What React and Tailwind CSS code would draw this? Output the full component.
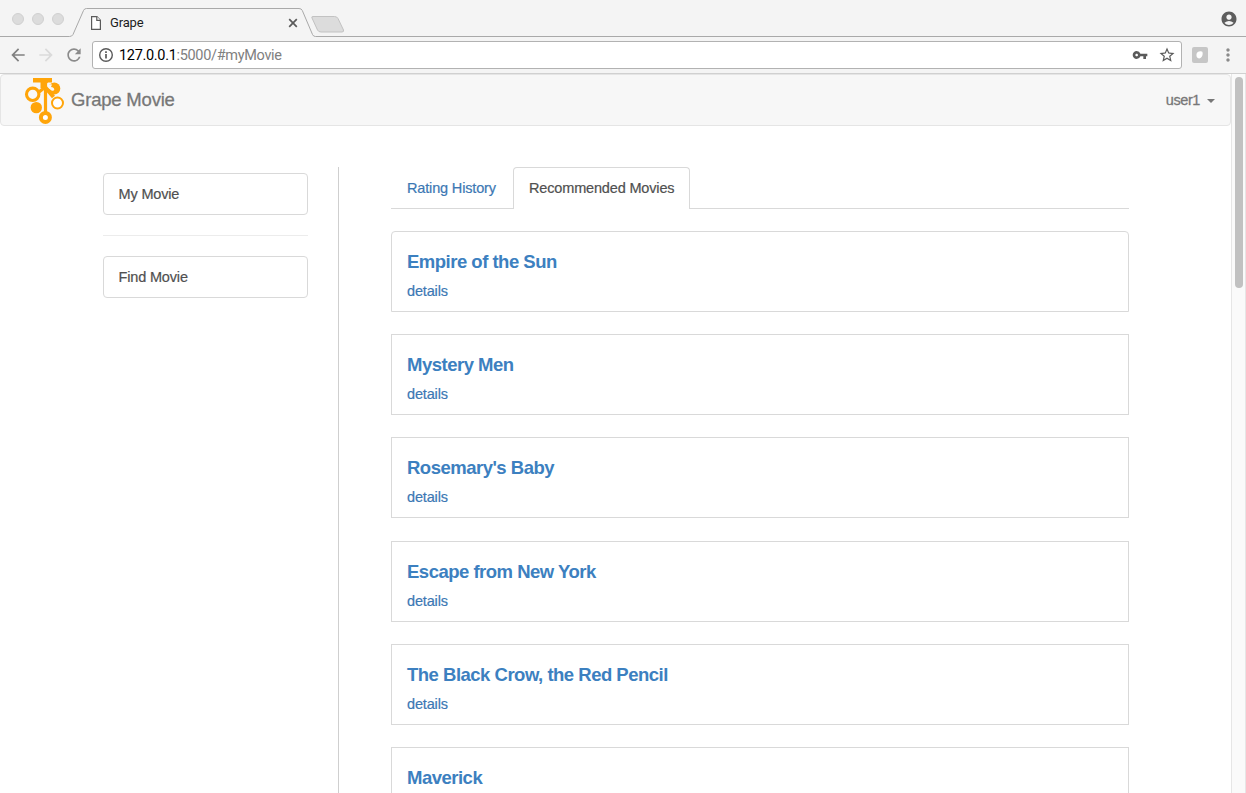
import React from "react";
import {
  MdAccountCircle,
  MdArrowBack,
  MdArrowForward,
  MdMoreVert,
  MdRefresh,
  MdStarBorder,
  MdVpnKey,
} from "react-icons/md";

const movies = [
  "Empire of the Sun",
  "Mystery Men",
  "Rosemary's Baby",
  "Escape from New York",
  "The Black Crow, the Red Pencil",
  "Maverick",
];

function TabStrip() {
  return (
    <div className="relative flex h-[37px] shrink-0 items-center bg-[#f4f4f4]">
      <svg className="absolute inset-0" width="1246" height="37" viewBox="0 0 1246 37" fill="none">
        <path d="M0 36.5H69.500Q72 36.500 73 34.500L83.500 10.500Q84.300 8.500 86.500 8.500H299Q301.500 8.500 302.300 10.500L312.500 34.500Q313.300 36.500 315.500 36.500H1246" stroke="#a9a9a9" />
        <path d="M313 16.500H334.500Q337 16.500 338 18.500L343.500 30Q344 32 342 32H321Q318.500 32 317.500 30L312 18Q311.300 16.500 313 16.500Z" fill="#dcdcdc" stroke="#c2c2c2" />
      </svg>
      <div className="relative flex w-full items-center pb-px pl-3">
        <div className="mt-0.5 flex gap-2">
          {[0, 1, 2].map((n) => (
            <span key={n} className="size-3 rounded-full border border-[#d0d0d0] bg-[#dcdcdc]" />
          ))}
        </div>
        <svg className="mt-2.5 ml-[26px]" width="12" height="14" viewBox="0 0 12 14" fill="#fff" stroke="#5a5a5a" strokeWidth="1.200">
          <path d="M1.600 .6H6.800L10.400 4.300V13.400H1.600Z" />
          <path d="M6.800 .6V4.300H10.400" />
        </svg>
        <span className="mt-2.5 ml-2 w-[178px] font-[Roboto] text-[13px] leading-5 text-[#1c1c1c]">Grape</span>
        <svg className="mt-[9px]" width="10" height="10" viewBox="0 0 10 10" stroke="#5a5a5a" strokeWidth="1.700">
          <path d="M1.200 1.200L8.800 8.800M8.800 1.200L1.200 8.800" />
        </svg>
        <MdAccountCircle className="mt-0.5 mr-2 ml-auto size-[18px] text-[#5d5d5d]" />
      </div>
    </div>
  );
}

function Toolbar() {
  return (
    <div className="flex h-[37px] shrink-0 items-center border-b border-[#d0d0d0] bg-[#f4f4f4] pr-2 pl-2">
      <MdArrowBack className="size-5 text-[#808080]" />
      <MdArrowForward className="ml-2 size-5 text-[#dadada]" />
      <MdRefresh className="ml-2 size-5 text-[#8b8b8b]" />
      <div className="ml-2 flex h-[28px] w-[1090px] items-center rounded-[3px] border border-[#b2b2b2] bg-white pr-[5px] pl-[5px]">
        <svg width="16" height="16" viewBox="0 0 16 16" fill="none" stroke="#5a5a5a">
          <circle cx="8" cy="8" r="6.300" strokeWidth="1.400" />
          <path d="M8 7.100V11.500M8 4.300V6" strokeWidth="1.700" />
        </svg>
        <span className="mt-0.5 ml-[5px] font-[Roboto] text-[14.500px] leading-5 tracking-[-0.32px] text-[#808080]">
          <span className="text-black">127.0.0.1</span>:5000/#myMovie
        </span>
        <MdVpnKey className="ml-auto size-4 text-[#5a5a5a]" />
        <MdStarBorder className="ml-[10px] size-[18px] text-[#5a5a5a]" />
      </div>
      <svg className="ml-[10px]" width="16" height="16" viewBox="0 0 16 16">
        <rect width="16" height="16" rx="2" fill="#c6c6c6" />
        <path d="M4.500 7Q5 4.500 8.500 4.200Q11 4 10.700 6.500Q10.500 10.300 8 11.300Q4 12 4.500 7Z" fill="#fff" />
      </svg>
      <MdMoreVert className="ml-auto size-5 text-[#8a8a8a]" />
    </div>
  );
}

function Logo() {
  return (
    <svg width="40" height="48" viewBox="24 76 40 48" fill="none" stroke="#ffa50a">
      <circle cx="54.300" cy="88.500" r="6" fill="#ffa50a" stroke="none" />
      <path d="M47.500 85.500Q49 83.500 52 84.500L51 87Q54 87 54.300 89.500Q53.800 91.500 51.500 90.500L48 88Z" fill="#f7f7f7" stroke="none" />
      <path d="M33 78H52V82.500H48L45.500 85.500L42 82.500H33Z" fill="#ffa50a" stroke="none" />
      <path d="M43.500 80V88" strokeWidth="6" />
      <path d="M45 87L53.500 97" strokeWidth="4" />
      <path d="M45.500 84V112.500" strokeWidth="3.200" />
      <path d="M44 88L39 92" strokeWidth="3.500" />
      <circle cx="32.700" cy="94.300" r="6.200" fill="#f9f9f9" strokeWidth="3.100" />
      <circle cx="57.500" cy="103" r="5.500" fill="#fff" strokeWidth="2" />
      <circle cx="36.300" cy="107.600" r="5.700" fill="#ffa50a" stroke="none" />
      <circle cx="45.400" cy="117.400" r="4.500" fill="#fff" strokeWidth="4" />
    </svg>
  );
}

function MovieCard({ title, first }) {
  return (
    <article className={`flex h-[81px] shrink-0 flex-col border border-[#d9d9d9] px-[15px] pt-[19px] ${first ? "rounded-t" : ""}`}>
      <h4 className="text-[18.500px] leading-[22px] font-bold tracking-[-0.5px] text-[#3c80c0]">{title}</h4>
      <a className="mt-2 text-[14.500px] leading-5 text-[#3c78b4] [-webkit-text-stroke:0.2px]">details</a>
    </article>
  );
}

export default function App() {
  return (
    <div className="flex h-[793px] w-[1246px] flex-col overflow-hidden bg-white font-['Liberation_Sans',Arial,sans-serif] text-[14.500px] tracking-[-0.16px] text-[#505050]">
      <TabStrip />
      <Toolbar />
      <div className="flex min-h-0 flex-1">
        <div className="flex w-[1231px] flex-col">
          <nav className="flex h-[52px] shrink-0 items-center rounded border border-[#e5e5e5] bg-[#f7f7f7] pr-[15px] pl-[23px] text-[#777] [-webkit-text-stroke:0.3px]">
            <Logo />
            <span className="ml-[7px] text-[18.500px] tracking-[-0.2px]">Grape Movie</span>
            <span className="mt-0.5 ml-auto tracking-[-0.4px]">user1</span>
            <span className="mt-0.5 ml-[7px] border-x-4 border-t-4 border-x-transparent border-t-[#777]" />
          </nav>
          <div className="flex min-h-0 flex-1 pt-[41px] pl-[103px]">
            <aside className="flex w-[205px] flex-col pt-[6px] [-webkit-text-stroke:0.2px]">
              <a className="flex h-[42px] items-center rounded border border-[#d9d9d9] px-[14.500px] pt-0.5">My Movie</a>
              <hr className="my-5 border-[#ececec]" />
              <a className="flex h-[42px] items-center rounded border border-[#d9d9d9] px-[14.500px] pt-0.5">Find Movie</a>
            </aside>
            <main className="ml-[30px] flex flex-1 flex-col border-l border-[#cfcfcf] pr-[102px] pl-[52px]">
              <div className="flex h-[42px] shrink-0 border-b border-[#d9d9d9] [-webkit-text-stroke:0.2px]">
                <a className="flex w-[122px] items-center pt-0.5 pl-4 text-[#3c78b4]">Rating History</a>
                <a className="-mb-px flex h-[42px] w-[177px] items-center rounded-t border border-b-0 border-[#d9d9d9] bg-white pl-[15px]">Recommended Movies</a>
              </div>
              <div className="mt-[22px] flex flex-col gap-[22.200px]">
                {movies.map((title, i) => (
                  <MovieCard key={title} title={title} first={i === 0} />
                ))}
              </div>
            </main>
          </div>
        </div>
        <div className="flex w-[15px] justify-center border-x border-[#e6e6e6] bg-[#fafafa] pt-[3px]">
          <div className="h-[211px] w-2 rounded-full bg-[#c1c1c1]" />
        </div>
      </div>
    </div>
  );
}
